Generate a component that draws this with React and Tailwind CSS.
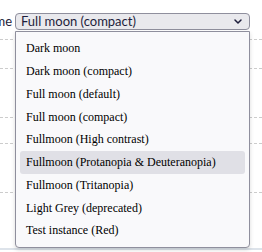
import React from 'react';

const themes = [
  'Dark moon',
  'Dark moon (compact)',
  'Full moon (default)',
  'Full moon (compact)',
  'Fullmoon (High contrast)',
  'Fullmoon (Protanopia & Deuteranopia)',
  'Fullmoon (Tritanopia)',
  'Light Grey (deprecated)',
  'Test instance (Red)'
];

const App = () => {
  const active = 5;

  return (
    <div className="relative w-[262px] h-[252px] overflow-hidden bg-white">
      {/* Settings row */}
      <div className="flex items-start pt-[13px] h-[30px]">
        <div className="w-[12px] h-[17px] flex items-center justify-end whitespace-nowrap text-[13px] text-[#1e1e3c] font-['Lato',sans-serif] mr-[3px]">
          Theme
        </div>
        <div className="w-[235px] h-[17px] flex items-center justify-between pl-[5px] pr-[7px] bg-[#e9e9ed] border border-[#8f8f9d] rounded-[4px] text-[13px] leading-none text-[#1e1e3c] font-['Lato',sans-serif]">
          <span>Full moon (compact)</span>
          <svg width="8" height="5" viewBox="0 0 8 5" fill="none">
            <path d="M1 1l3 3 3-3" stroke="#1e1e3c" strokeWidth="1.5" strokeLinecap="round" strokeLinejoin="round" />
          </svg>
        </div>
      </div>

      {/* Background rows */}
      <div className="flex flex-col">
        <div className="h-[10px] border-b border-dashed border-[#cccccc]" />
        <div className="h-[29px] border-b border-dashed border-[#cccccc]" />
        <div className="h-[49px] border-b border-dashed border-[#cccccc]" />
        <div className="h-[26px] border-b border-dashed border-[#cccccc]" />
        <div className="h-[49px] border-b border-dashed border-[#cccccc]" />
        <div className="h-[57px] border-b-2 border-[#dde3ea]" />
      </div>

      {/* Open dropdown */}
      <div className="absolute left-[15px] top-[31px] w-[235px] bg-[#f9f9fb] border border-[#8f8f9d] rounded-b-[4px] shadow-[0_2px_4px_rgba(0,0,0,0.15)] px-[4px] py-[5px] font-['Liberation_Serif',serif] text-[12px] text-black">
        {themes.map((t, i) => (
          <div
            key={t}
            className={`h-[22.75px] flex items-center px-[6px] rounded-[3px] whitespace-nowrap ${i === active ? 'bg-[#e0e0e6]' : ''}`}
          >
            {t}
          </div>
        ))}
      </div>
    </div>
  );
};

export default App;
